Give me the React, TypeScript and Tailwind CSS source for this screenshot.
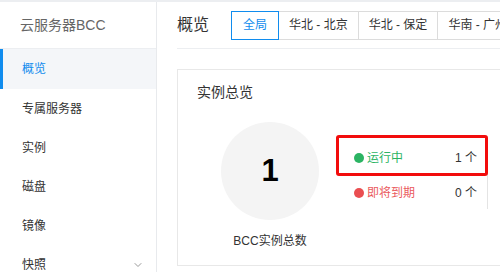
import { ChevronDown } from "lucide-react";

const menu = ["专属服务器", "实例", "磁盘", "镜像", "快照"];
const tabs = ["全局", "华北 - 北京", "华北 - 保定", "华南 - 广州"];

export default function App() {
  return (
    <div
      className="flex h-[272px] w-[500px] flex-col overflow-hidden bg-white"
      style={{ fontFamily: '"Liberation Sans", "Noto Sans CJK SC", sans-serif' }}
    >
      <div className="h-[2px] shrink-0 bg-[#eceef1]" />
      <div className="flex min-h-0 flex-1">
        {/* sidebar */}
        <aside className="w-[157px] shrink-0 border-r border-[#e8eaed]">
          <div className="flex h-[47px] items-center border-b border-[#eceef1] pl-[20px] text-[14px] text-[#666]">
            云服务器BCC
          </div>
          <div className="flex h-[40px] items-center border-l-[3px] border-[#108cee] bg-[#f4f6f9] pl-[19px] text-[12px] text-[#108cee]">
            概览
          </div>
          {menu.map((item) => (
            <div
              key={item}
              className="flex h-[39px] items-center justify-between pl-[22px] pr-[12px] text-[12px] text-[#333]"
            >
              <span>{item}</span>
              {item === "快照" && <ChevronDown size={12} color="#9a9a9a" />}
            </div>
          ))}
        </aside>

        {/* main */}
        <main className="min-w-0 flex-1 overflow-hidden pl-[20px]">
          <div className="flex h-[47px] items-center border-b border-[#eceef1]">
            <h1 className="mr-[22px] shrink-0 whitespace-nowrap text-[16px] text-[#333]">概览</h1>
            <div className="flex shrink-0">
              {tabs.map((t, i) => (
                <div
                  key={t}
                  className={
                    i === 0
                      ? "flex h-[29px] shrink-0 items-center whitespace-nowrap border border-[#108cee] px-[11px] text-[12px] text-[#108cee]"
                      : "flex h-[29px] shrink-0 items-center whitespace-nowrap border border-l-0 border-[#dcdcdc] px-[10px] text-[12px] text-[#333]"
                  }
                >
                  {t}
                </div>
              ))}
            </div>
          </div>

          <section className="mt-[20px] h-[197px] border border-r-0 border-[#e8e8e8] pl-[19px] pt-[12px]">
            <h2 className="text-[14px] leading-[20px] text-[#333]">实例总览</h2>
            <div className="mt-[20px] flex">
              <div className="ml-[24px] flex w-[98px] flex-col items-center">
                <div className="flex h-[98px] w-[98px] items-center justify-center rounded-full bg-[#f4f4f4] text-[31px] font-bold text-black">
                  1
                </div>
                <div className="mt-[12px] whitespace-nowrap text-[12px] text-[#333]">
                  BCC实例总数
                </div>
              </div>

              <div className="relative ml-[17px] mt-[18px] h-[69px] w-[152px] border-r border-[#e4e4e4]">
                <div className="flex h-[35px] items-center pl-[18px] pr-[10px] text-[12px]">
                  <span className="mr-[3px] h-[10px] w-[10px] shrink-0 rounded-full bg-[#2bb463]" />
                  <span className="text-[#2bb463]">运行中</span>
                  <span className="ml-auto text-[#333]">1 个</span>
                </div>
                <div className="flex h-[35px] items-center pl-[18px] pr-[10px] text-[12px]">
                  <span className="mr-[3px] h-[10px] w-[10px] shrink-0 rounded-full bg-[#ea4e51]" />
                  <span className="text-[#ea5a5d]">即将到期</span>
                  <span className="ml-auto text-[#333]">0 个</span>
                </div>
                <div className="absolute left-0 top-[-5px] h-[41px] w-[152px] rounded-[3px] border-[3px] border-[#f20c0c]" />
              </div>
            </div>
          </section>
        </main>
      </div>
    </div>
  );
}
